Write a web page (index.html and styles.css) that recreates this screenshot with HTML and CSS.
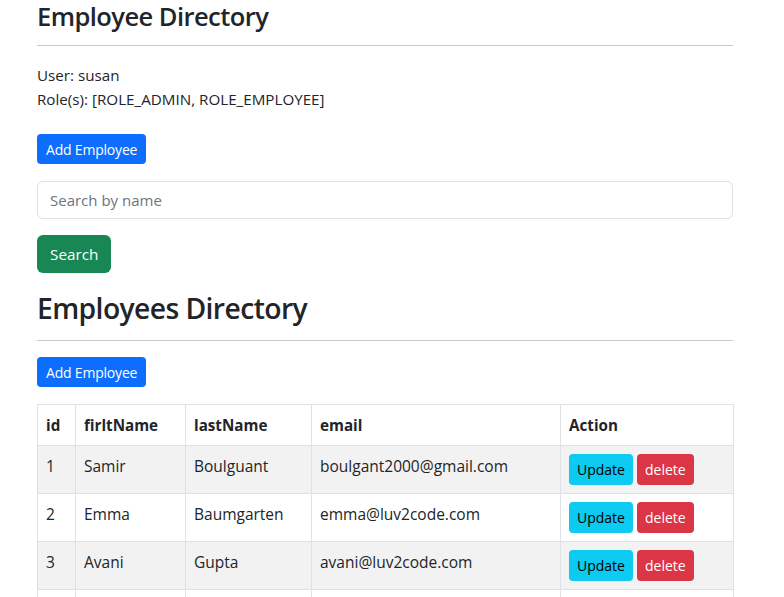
FILE: index.html
```html
<!DOCTYPE html>
<html lang="en">
<head>
<meta charset="utf-8">
<title>Employee Directory</title>
<link rel="stylesheet" href="styles.css">
</head>
<body>
<div class="container">
  <h3 class="title-sm">Employee Directory</h3>
  <hr class="rule rule-top">
  <div class="user-info">
    <div>User: susan</div>
    <div>Role(s): [ROLE_ADMIN, ROLE_EMPLOYEE]</div>
  </div>
  <button class="btn btn-primary btn-add-1">Add Employee</button>
  <input class="search-input" type="text" placeholder="Search by name">
  <button class="btn btn-success btn-search">Search</button>
  <h2 class="title-lg">Employees Directory</h2>
  <hr class="rule rule-mid">
  <button class="btn btn-primary btn-add-2">Add Employee</button>
  <table class="table">
    <colgroup>
      <col class="c-id"><col class="c-first"><col class="c-last"><col class="c-email"><col class="c-action">
    </colgroup>
    <thead>
      <tr><th>id</th><th>firltName</th><th>lastName</th><th>email</th><th>Action</th></tr>
    </thead>
    <tbody>
      <tr class="odd"><td>1</td><td>Samir</td><td>Boulguant</td><td>boulgant2000@gmail.com</td><td><button class="btn btn-info">Update</button><button class="btn btn-danger">delete</button></td></tr>
      <tr><td>2</td><td>Emma</td><td>Baumgarten</td><td>emma@luv2code.com</td><td><button class="btn btn-info">Update</button><button class="btn btn-danger">delete</button></td></tr>
      <tr class="odd"><td>3</td><td>Avani</td><td>Gupta</td><td>avani@luv2code.com</td><td><button class="btn btn-info">Update</button><button class="btn btn-danger">delete</button></td></tr>
      <tr><td>4</td><td>Yuri</td><td>Petrov</td><td>yuri@luv2code.com</td><td><button class="btn btn-info">Update</button><button class="btn btn-danger">delete</button></td></tr>
    </tbody>
  </table>
</div>
</body>
</html>
```
FILE: styles.css
```css
html, body {
  margin: 0;
  padding: 0;
  background: #fff;
}
body {
  font-family: "Open Sans", "Noto Sans", sans-serif;
  font-size: 16px;
  line-height: 24px;
  color: #212529;
}
.container {
  width: 696px;
  margin-left: 37px;
  display: flex;
  flex-direction: column;
  align-items: flex-start;
}
.title-sm {
  margin: 0;
  font-size: 25.5px;
  line-height: 33px;
  font-weight: 600;
  letter-spacing: -0.55px;
}
.title-lg {
  margin: 18px 0 0 0;
  font-size: 28.3px;
  line-height: 34px;
  font-weight: 600;
  letter-spacing: -0.6px;
}
.rule {
  align-self: stretch;
  border: 0;
  border-top: 1px solid #c8c9ca;
  height: 0;
  margin: 0;
}
.rule-top { margin-top: 12px; }
.rule-mid { margin-top: 15px; }
.user-info {
  margin-top: 17px;
  font-size: 15.2px;
}
.btn {
  font-family: inherit;
  border: 1px solid transparent;
  border-radius: 4px;
  cursor: pointer;
  color: #fff;
}
.btn-primary {
  background: #0d6efd;
  font-size: 14px;
  height: 30px;
  padding: 0 8px;
  letter-spacing: -0.2px;
}
.btn-add-1 { margin-top: 23px; }
.btn-add-2 { margin-top: 16px; }
.search-input {
  align-self: stretch;
  margin-top: 17px;
  height: 38px;
  box-sizing: border-box;
  border: 1px solid #dee2e6;
  border-radius: 6px;
  padding: 0 12px;
  font-family: inherit;
  font-size: 15px;
  color: #212529;
  outline: none;
}
.search-input::placeholder { color: #6c757d; }
.btn-search {
  margin-top: 16px;
  background: #198754;
  height: 38px;
  padding: 0 12px;
  border-radius: 6px;
  font-size: 15.3px;
}
.table {
  margin-top: 17px;
  width: 696px;
  border-collapse: collapse;
  table-layout: fixed;
  font-size: 15.5px;
}
.c-id { width: 38px; }
.c-first { width: 110px; }
.c-last { width: 126px; }
.c-email { width: 249px; }
.c-action { width: 173px; }
.table th, .table td {
  border: 1px solid #dee2e6;
  padding: 8px;
  text-align: left;
  vertical-align: top;
}
.table th {
  height: 24px;
  font-weight: 700;
  font-size: 15.2px;
}
.table td {
  height: 31px;
}
.table tr.odd td {
  background: #f2f2f2;
}
.table td .btn {
  height: 31px;
  font-size: 14px;
  padding: 0 7px;
  border-radius: 4px;
  margin-right: 4px;
}
.btn-info {
  background: #0dcaf0;
  color: #000;
}
.btn-danger {
  background: #dc3545;
  color: #fff;
}
```
